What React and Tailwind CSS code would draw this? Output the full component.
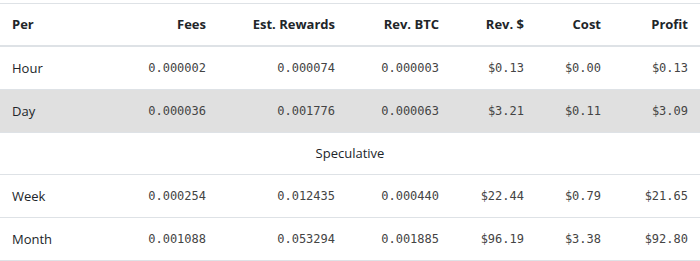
const rows = [
  { per: "Hour", fees: "0.000002", rewards: "0.000074", btc: "0.000003", rev: "$0.13", cost: "$0.00", profit: "$0.13" },
  { per: "Day", fees: "0.000036", rewards: "0.001776", btc: "0.000063", rev: "$3.21", cost: "$0.11", profit: "$3.09", active: true },
];

const speculative = [
  { per: "Week", fees: "0.000254", rewards: "0.012435", btc: "0.000440", rev: "$22.44", cost: "$0.79", profit: "$21.65" },
  { per: "Month", fees: "0.001088", rewards: "0.053294", btc: "0.001885", rev: "$96.19", cost: "$3.38", profit: "$92.80" },
];

const cell = "px-[12px] py-[10px] border-t border-[#dee2e6] text-right";
const mono = "font-['DejaVu_Sans_Mono',monospace] text-[12px] text-[#444]";

const Row = ({ r }) => (
  <tr className={r.active ? "bg-[#e0e0e0]" : ""}>
    <td className="px-[12px] py-[10px] border-t border-[#dee2e6] text-left">{r.per}</td>
    <td className={cell}><span className={mono}>{r.fees}</span></td>
    <td className={cell}><span className={mono}>{r.rewards}</span></td>
    <td className={cell}><span className={mono}>{r.btc}</span></td>
    <td className={cell}><span className={mono}>{r.rev}</span></td>
    <td className={cell}><span className={mono}>{r.cost}</span></td>
    <td className={cell}><span className={mono}>{r.profit}</span></td>
  </tr>
);

export default function App() {
  return (
    <div className="w-[700px] h-[261px] overflow-hidden bg-white pt-[3px] font-['Open_Sans',sans-serif] text-[13px] leading-[21px] text-[#212529]">
      <table className="w-full table-fixed border-collapse">
        <colgroup>
          <col className="w-[110px]" />
          <col className="w-[108px]" />
          <col className="w-[129px]" />
          <col className="w-[104px]" />
          <col className="w-[85px]" />
          <col className="w-[77px]" />
          <col className="w-[87px]" />
        </colgroup>
        <thead>
          <tr className="font-bold">
            <th className="px-[12px] py-[10px] border-t border-b-2 border-[#dee2e6] text-left">Per</th>
            <th className="px-[12px] py-[10px] border-t border-b-2 border-[#dee2e6] text-right">Fees</th>
            <th className="px-[12px] py-[10px] border-t border-b-2 border-[#dee2e6] text-right">Est. Rewards</th>
            <th className="px-[12px] py-[10px] border-t border-b-2 border-[#dee2e6] text-right">Rev. BTC</th>
            <th className="px-[12px] py-[10px] border-t border-b-2 border-[#dee2e6] text-right">Rev. $</th>
            <th className="px-[12px] py-[10px] border-t border-b-2 border-[#dee2e6] text-right">Cost</th>
            <th className="px-[12px] py-[10px] border-t border-b-2 border-[#dee2e6] text-right">Profit</th>
          </tr>
        </thead>
        <tbody>
          {rows.map((r) => <Row key={r.per} r={r} />)}
          <tr>
            <td colSpan={7} className="px-[12px] py-[10px] border-t border-[#dee2e6] text-center">Speculative</td>
          </tr>
          {speculative.map((r) => <Row key={r.per} r={r} />)}
        </tbody>
        <tfoot>
          <tr><td colSpan={7} className="border-t border-[#dee2e6]"></td></tr>
        </tfoot>
      </table>
    </div>
  );
}
